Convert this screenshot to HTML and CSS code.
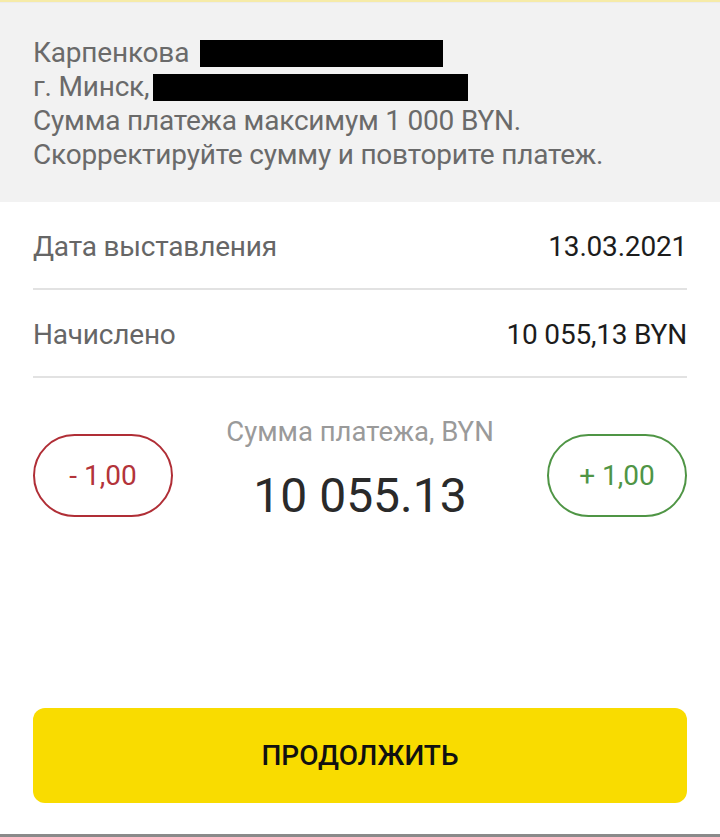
FILE: index.html
```html
<!DOCTYPE html>
<html lang="ru">
<head>
<meta charset="utf-8">
<link rel="stylesheet" href="styles.css">
</head>
<body>
<div class="topline"></div>
<section class="notice">
  <p class="notice-line">Карпенкова <span class="redact redact-name"></span></p>
  <p class="notice-line">г. Минск,<span class="redact redact-addr"></span></p>
  <p class="notice-line">Сумма платежа максимум 1 000 BYN.</p>
  <p class="notice-line">Скорректируйте сумму и повторите платеж.</p>
</section>
<main class="content">
  <div class="row">
    <span class="row-label">Дата выставления</span>
    <span class="row-value">13.03.2021</span>
  </div>
  <div class="row">
    <span class="row-label">Начислено</span>
    <span class="row-value">10 055,13 BYN</span>
  </div>
  <div class="amount">
    <button class="step step-minus">- 1,00</button>
    <div class="amount-center">
      <div class="amount-label">Сумма платежа, BYN</div>
      <div class="amount-value">10 055.13</div>
    </div>
    <button class="step step-plus">+ 1,00</button>
  </div>
  <button class="continue">ПРОДОЛЖИТЬ</button>
</main>
<div class="bottomline"></div>
</body>
</html>
```
FILE: styles.css
```css
* { box-sizing: border-box; }
html, body { margin: 0; padding: 0; }
body {
  width: 720px;
  height: 837px;
  background: #ffffff;
  font-family: Roboto, "Noto Sans", "Liberation Sans", sans-serif;
  display: flex;
  flex-direction: column;
  overflow: hidden;
}
.topline {
  height: 3px;
  background: #f6eba8;
  border-bottom: 1px solid #ececec;
}
.notice {
  background: #f2f2f2;
  padding: 33px 33px 30px;
}
.notice-line {
  margin: 0;
  font-size: 28px;
  line-height: 34px;
  color: #6a6a6a;
  white-space: nowrap;
  display: flex;
  align-items: center;
  letter-spacing: -0.2px;
}
.redact {
  display: inline-block;
  background: #000;
  height: 27px;
}
.redact-name { width: 243px; margin-left: 11px; }
.redact-addr { width: 315px; margin-left: 4px; }
.content {
  flex: 1;
  padding: 0 33px;
  display: flex;
  flex-direction: column;
}
.row {
  height: 88px;
  display: flex;
  justify-content: space-between;
  align-items: center;
  border-bottom: 2px solid #e2e2e2;
  padding-top: 2px;
}
.row-label {
  font-size: 28px;
  color: #666;
  letter-spacing: -0.2px;
}
.row-value {
  font-size: 28px;
  color: #1c1c1c;
  letter-spacing: -0.2px;
}
.amount {
  display: flex;
  justify-content: space-between;
  align-items: flex-start;
  padding-top: 36px;
}
.step {
  width: 140px;
  height: 83px;
  margin-top: 20px;
  border-radius: 42px;
  background: #fff;
  font-family: inherit;
  font-size: 28px;
  display: flex;
  align-items: center;
  justify-content: center;
  padding: 0;
}
.step-minus { border: 2px solid #b02e36; color: #b3343a; }
.step-plus { border: 2px solid #4f9545; color: #4f9545; }
.amount-center {
  display: flex;
  flex-direction: column;
  align-items: center;
}
.amount-label {
  font-size: 27.5px;
  line-height: 36px;
  color: #9a9a9a;
}
.amount-value {
  font-size: 48px;
  line-height: 56px;
  color: #2a2a2a;
  margin-top: 18px;
}
.continue {
  margin-top: 184px;
  height: 95px;
  width: 100%;
  border: none;
  border-radius: 12px;
  background: #f9dc00;
  font-family: inherit;
  font-size: 28px;
  font-weight: 500;
  color: #111;
}
.bottomline {
  height: 3px;
  background: #8a8a8a;
}
```
